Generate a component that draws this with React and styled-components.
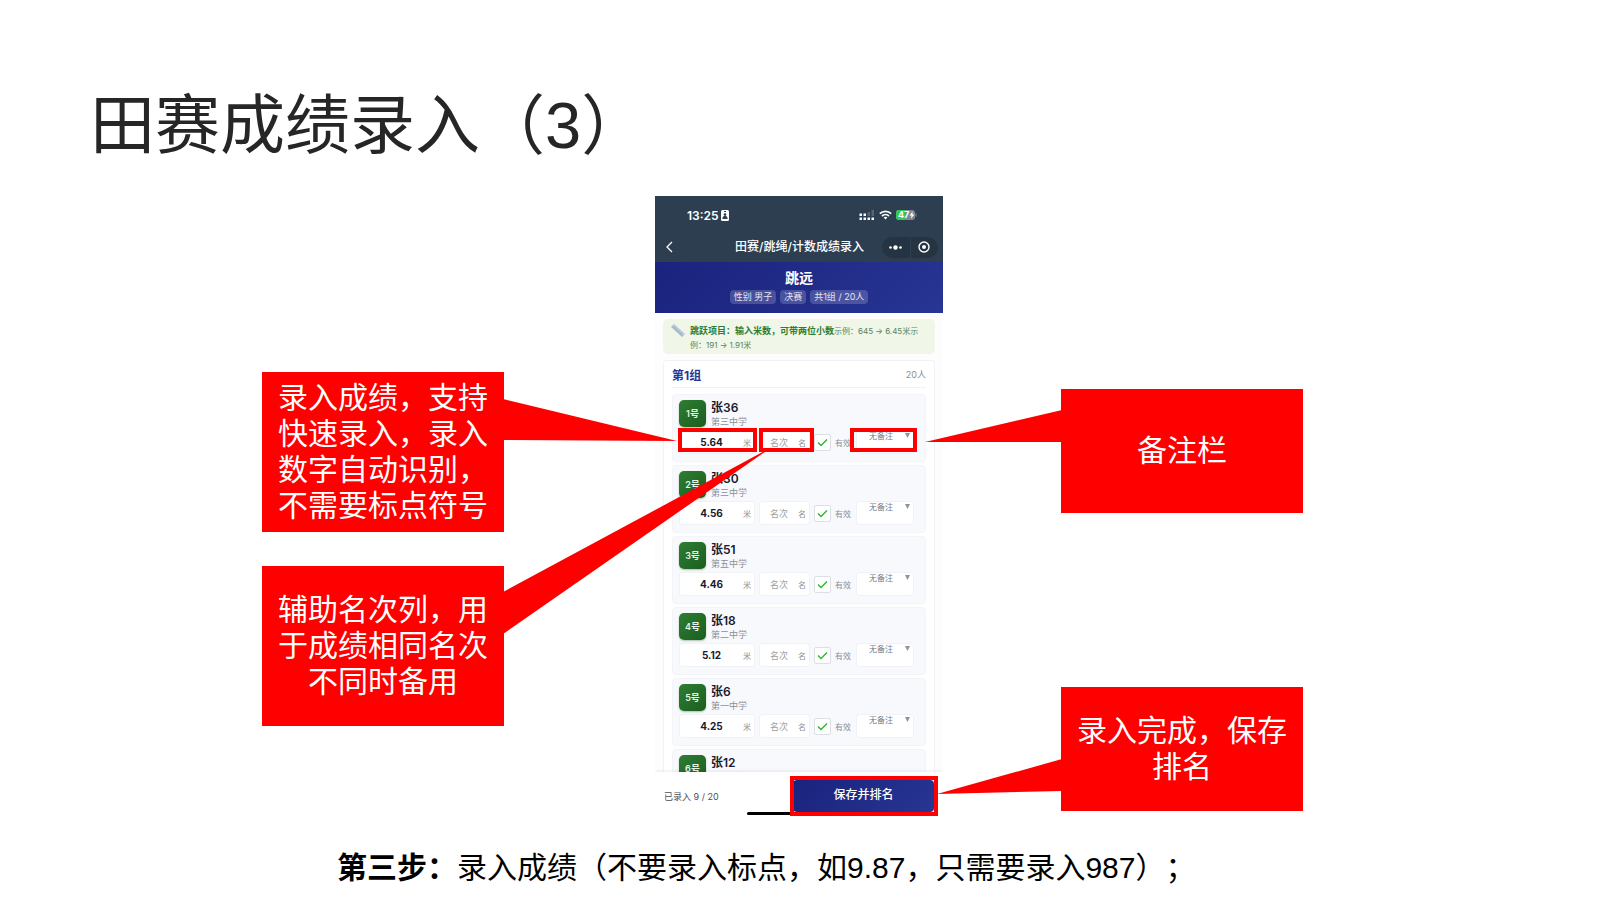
import React from "react";
import styled, { createGlobalStyle } from "styled-components";

const Palette = {
  ink: "#262626",
  mark: "#ff0000",
  bar: "#2c3e50",
  navy: "#1a237e",
  indigo: "#283593",
  green: "#1b5e20",
  leaf: "#2e7d32",
  tip: "#f0f6e8",
  line: "#f0f2f6",
  row: "#f8f9fc",
  dark: "#1a1a2e",
  dimmed: "#8a8f99",
};

const Global = createGlobalStyle`
  * {
    box-sizing: border-box;
  }
  body {
    margin: 0;
    background: #ffffff;
    color: #000000;
    font-family: "Liberation Sans", "Noto Sans CJK SC", sans-serif;
    text-spacing-trim: space-all;
  }
  input,
  select,
  button {
    font-family: inherit;
    margin: 0;
    padding: 0;
    border: none;
    background: none;
  }
`;

const Slide = styled.main`
  padding: 92px 92px 0 90px;
  min-height: 100vh;
  overflow: hidden;
`;

const Title = styled.h1`
  margin: 0 0 36px;
  color: ${Palette.ink};
  font-size: 65px;
  font-weight: 400;
  line-height: 68px;
`;

const Stage = styled.section`
  display: grid;
  grid-template-columns: 1fr 288px 1fr;
`;

const Notes = styled.div`
  position: relative;
  z-index: 2;
  display: flex;
  flex-direction: column;
  align-items: ${(p) => (p.$side === "left" ? "flex-end" : "flex-start")};
  gap: ${(p) => (p.$side === "left" ? "34px" : "174px")};
  padding: ${(p) => (p.$side === "left" ? "176px 151px 0 0" : "193px 0 0 118px")};
`;

const NoteBox = styled.div`
  position: relative;
  display: flex;
  align-items: center;
  justify-content: center;
  width: 242px;
  min-height: ${(p) => (p.$tall ? "160px" : "124px")};
  padding: 8px 16px;
  background: ${Palette.mark};
  color: #ffffff;
  font-size: 30px;
  line-height: 36px;
  text-align: center;

  p {
    margin: 0;
    width: 210px;
  }

  svg {
    position: absolute;
    top: 0;
    left: 0;
    overflow: visible;
    pointer-events: none;
  }
`;

const Phone = styled.article`
  display: flex;
  flex-direction: column;
  height: 620px;
  overflow: hidden;
  background: #fdfdfe;
  font-family: Inter, "Noto Sans CJK SC", sans-serif;
`;

const TopBar = styled.header`
  background: ${Palette.bar};
  color: #ffffff;
`;

const StatusBar = styled.div`
  display: flex;
  align-items: center;
  justify-content: space-between;
  height: 38px;
  padding: 0 26px 0 32px;
  font-size: 12px;
  font-weight: 600;

  div {
    display: flex;
    align-items: center;
    gap: 4px;
  }
  div:first-child {
    gap: 2px;
  }
`;

const NavBar = styled.div`
  display: grid;
  grid-template-columns: 62px 1fr 61px;
  align-items: center;
  height: 28px;
  padding-bottom: 2px;

  h2 {
    margin: 0;
    font-size: 12px;
    font-weight: 500;
    line-height: 16px;
    text-align: center;
    white-space: nowrap;
  }
`;

const BackButton = styled.button`
  display: flex;
  width: 20px;
  padding-left: 10px;
  color: #ffffff;
`;

const Capsule = styled.div`
  display: flex;
  width: 56px;
  height: 21px;
  border-radius: 11px;
  background: #253443;

  button {
    flex: 1;
    display: flex;
    align-items: center;
    justify-content: center;
  }
  button + button {
    border-left: 1px solid #2f3f4f;
  }
`;

const EventHead = styled.div`
  display: flex;
  flex-direction: column;
  align-items: center;
  gap: 3px;
  height: 51px;
  padding-top: 7px;
  background: linear-gradient(135deg, ${Palette.navy}, ${Palette.indigo});
  color: #ffffff;

  h3 {
    margin: 0;
    font-size: 14px;
    font-weight: 700;
    line-height: 18px;
  }
  ul {
    display: flex;
    gap: 4px;
    margin: 0;
    padding: 0;
    list-style: none;
  }
  li {
    padding: 0 4px;
    border-radius: 4px;
    background: rgba(255, 255, 255, 0.18);
    color: #e2e4f3;
    font-size: 9px;
    line-height: 14px;
    white-space: nowrap;
  }
`;

const Tip = styled.div`
  display: flex;
  gap: 5px;
  margin: 6px 8px;
  padding: 5px 14px 3px 8px;
  border-radius: 5px;
  background: ${Palette.tip};
  color: #55855a;
  font-size: 8px;
  line-height: 14px;

  svg {
    flex: none;
  }
  p {
    flex: 1;
    margin: 0 0 -1px;
  }
  strong {
    color: ${Palette.leaf};
    font-size: 9px;
  }
`;

const Group = styled.section`
  flex: 1;
  min-height: 0;
  overflow: hidden;
  margin: 0 8px;
  padding: 0 8px;
  border: 1px solid ${Palette.line};
  border-bottom: none;
  border-radius: 4px 4px 0 0;
  background: #ffffff;
`;

const GroupHead = styled.div`
  display: flex;
  align-items: center;
  justify-content: space-between;
  height: 27px;
  margin-bottom: 6px;
  border-bottom: 1px solid ${Palette.line};

  h4 {
    margin: 0;
    color: ${Palette.indigo};
    font-size: 12px;
    font-weight: 700;
  }
  span {
    color: ${Palette.dimmed};
    font-size: 9px;
  }
`;

const Athletes = styled.ol`
  display: flex;
  flex-direction: column;
  gap: 3px;
  margin: 0;
  padding: 0;
  list-style: none;
`;

const Athlete = styled.li`
  height: 68px;
  padding: 5px 6px;
  border: 1px solid #f3f4f8;
  border-radius: 4px;
  background: ${Palette.row};
`;

const Person = styled.div`
  display: flex;
  gap: 5px;
  height: 27px;
  margin-bottom: 3px;

  b {
    width: 27px;
    border-radius: 5px;
    background: linear-gradient(135deg, ${Palette.leaf}, ${Palette.green});
    box-shadow: 0 1px 2px rgba(27, 94, 32, 0.35);
    color: #e8f3e8;
    font-size: 9px;
    font-weight: 600;
    line-height: 27px;
    text-align: center;
  }
  h5 {
    margin: 0;
    color: ${Palette.dark};
    font-size: 12px;
    font-weight: 600;
    line-height: 15px;
  }
  p {
    margin: 0;
    color: ${Palette.dimmed};
    font-size: 9px;
    line-height: 13px;
  }
`;

const Controls = styled.div`
  display: flex;
  align-items: center;
  height: 24px;
  color: ${Palette.dimmed};
  font-size: 8px;
`;

const Marked = styled.div`
  position: relative;

  ${(p) =>
    p.$mark &&
    `&::after {
      content: "";
      position: absolute;
      z-index: 1;
      inset: ${p.$mark};
      border: 4px solid ${Palette.mark};
      pointer-events: none;
    }`}
`;

const Field = styled(Marked)`
  width: ${(p) => p.$width};
  margin-right: 4px;

  label {
    display: flex;
    align-items: center;
    height: 24px;
    padding-right: 3px;
    border: 1px solid ${Palette.line};
    border-radius: 3px;
    background: #ffffff;
  }
  input {
    flex: 1;
    min-width: 0;
    color: ${Palette.dark};
    font-size: ${(p) => (p.$score ? "10px" : "9px")};
    font-weight: ${(p) => (p.$score ? 700 : 400)};
    text-align: center;
  }
  input::placeholder {
    color: #9a9fa8;
  }
`;

const Valid = styled.label`
  display: flex;
  align-items: center;
  gap: 4px;
  margin-right: 5px;
  white-space: nowrap;

  input {
    appearance: none;
    width: 17px;
    height: 17px;
    border: 1px solid #dcdfe3;
    border-radius: 2px;
    background: #ffffff;
  }
  span {
    display: grid;
  }
  span > * {
    grid-area: 1 / 1;
    place-self: center;
  }
  svg {
    pointer-events: none;
  }
`;

const Remark = styled(Marked)`
  width: 58px;

  select {
    appearance: none;
    display: block;
    width: 100%;
    height: 24px;
    padding: 0 8px 11px 12px;
    border: 1px solid ${Palette.line};
    border-radius: 3px;
    background: #ffffff;
    color: #777c86;
    font-size: 8px;
    line-height: 11px;
  }
  svg {
    position: absolute;
    top: 3px;
    right: 4px;
    pointer-events: none;
  }
`;

const BottomBar = styled.footer`
  position: relative;
  display: flex;
  align-items: flex-start;
  justify-content: space-between;
  height: 44px;
  padding: 8px 9px 0;
  background: #ffffff;
  box-shadow: 0 -1px 3px rgba(0, 0, 0, 0.08);
  color: #4a4f5a;

  > span {
    font-size: 9px;
    line-height: 34px;
  }
  > i {
    position: absolute;
    bottom: 1px;
    left: 92px;
    width: 104px;
    height: 3px;
    border-radius: 2px;
    background: #000000;
  }
`;

const SaveButton = styled.button`
  display: block;
  width: 141px;
  height: 32px;
  padding-bottom: 6px;
  border-radius: 4px;
  background: linear-gradient(135deg, ${Palette.navy}, ${Palette.indigo});
  color: #ffffff;
  font-size: 12px;
  font-weight: 500;
`;

const Step = styled.p`
  margin: 34px 0 0;
  padding-left: 247px;
  font-size: 30px;
  line-height: 36px;
`;

const athletes = [
  { no: 1, name: "张36", school: "第三中学", score: "5.64" },
  { no: 2, name: "张30", school: "第三中学", score: "4.56" },
  { no: 3, name: "张51", school: "第五中学", score: "4.46" },
  { no: 4, name: "张18", school: "第二中学", score: "5.12" },
  { no: 5, name: "张6", school: "第一中学", score: "4.25" },
  { no: 6, name: "张12", school: "第一中学", score: "" },
];

function Note({ tall, tail, children }) {
  return (
    <NoteBox $tall={tall}>
      <p>{children}</p>
      <svg width="1" height="1" aria-hidden="true">
        <polygon points={tail} fill={Palette.mark} />
      </svg>
    </NoteBox>
  );
}

function AthleteRow({ no, name, school, score, marked }) {
  return (
    <Athlete>
      <Person>
        <b>{no}号</b>
        <div>
          <h5>{name}</h5>
          <p>{school}</p>
        </div>
      </Person>
      <Controls>
        <Field $score $width="76px" $mark={marked && "-2px -2px 2px -1px"}>
          <label>
            <input type="text" defaultValue={score} aria-label="成绩" />米
          </label>
        </Field>
        <Field $width="51px" $mark={marked && "-2px -4px 2px 0"}>
          <label>
            <input type="text" placeholder="名次" aria-label="名次" />名
          </label>
        </Field>
        <Valid>
          <span>
            <input type="checkbox" defaultChecked />
            <svg width="11" height="9" viewBox="0 0 11 9" fill="none">
              <path d="M1 4.5 4 7.5 10 1.5" stroke="#2fb52f" strokeWidth="1.4" />
            </svg>
          </span>
          有效
        </Valid>
        <Remark $mark={marked && "-2px -3px 2px -6px"}>
          <select aria-label="备注" defaultValue="无备注">
            <option>无备注</option>
          </select>
          <svg width="5" height="5" viewBox="0 0 5 5">
            <path d="M0 0h5L2.5 5z" fill="#8f939b" />
          </svg>
        </Remark>
      </Controls>
    </Athlete>
  );
}

function StatusIcons() {
  return (
    <div>
      <svg width="16" height="10" viewBox="0 0 16 10" fill="#ffffff">
        <path d="M.5 3.5H3V6H.5zM4.5 3.5H7V6H4.5zM.5 7.5H3V10H.5zM4.5 7.5H7V10H4.5zM8.5 7.5H11V10H8.5zM12.5 7.5H15V10h-2.5z" />
        <path d="M8.5 2H11v4H8.5zM12.5 0H15v6h-2.5z" opacity="0.2" />
      </svg>
      <svg width="13" height="10" viewBox="0 0 13 10" fill="none" stroke="#ffffff">
        <path d="M.8 3.6a8.2 8.2 0 0 1 11.4 0" strokeWidth="1.8" />
        <path d="M3 6a5.2 5.2 0 0 1 7 0" strokeWidth="1.7" />
        <path d="M6.5 9.5 4.7 7.6a2.8 2.8 0 0 1 3.6 0z" fill="#ffffff" stroke="none" />
      </svg>
      <svg width="21" height="10" viewBox="0 0 21 10">
        <rect width="19" height="10" rx="3" fill="#7d8893" />
        <path d="M3 0h6v10H3a3 3 0 0 1-3-3V3a3 3 0 0 1 3-3z" fill="#34c759" />
        <path d="M20 3.5v3" stroke="#7d8893" />
        <text x="2" y="8" fontSize="9" fontWeight="700" fill="#ffffff">
          47
        </text>
        <path d="M16.5 1.5 13.5 5.5h2L15 8.5 18.500 4.500h-2z" fill="#ffffff" />
      </svg>
    </div>
  );
}

function PhoneScreen() {
  return (
    <Phone>
      <TopBar>
        <StatusBar>
          <div>
            13:25
            <svg width="8" height="11" viewBox="0 0 8 11">
              <rect width="8" height="11" rx="1.5" fill="#ffffff" />
              <path d="M3 1.5h2M1.8 8.5a2.2 2.2 0 0 1 4.4 0z" stroke={Palette.bar} fill={Palette.bar} />
              <circle cx="4" cy="4.6" r="1.3" fill={Palette.bar} />
            </svg>
          </div>
          <StatusIcons />
        </StatusBar>
        <NavBar>
          <BackButton type="button" aria-label="返回">
            <svg width="8" height="12" viewBox="0 0 8 12" fill="none" stroke="currentColor">
              <path d="M7 1 2 6l5 5" strokeWidth="1.3" />
            </svg>
          </BackButton>
          <h2>田赛/跳绳/计数成绩录入</h2>
          <Capsule>
            <button type="button" aria-label="更多">
              <svg width="13" height="5" viewBox="0 0 13 5" fill="#ffffff">
                <circle cx="1.5" cy="2.5" r="1.3" />
                <circle cx="6.5" cy="2.5" r="2.2" />
                <circle cx="11.5" cy="2.5" r="1.3" />
              </svg>
            </button>
            <button type="button" aria-label="关闭">
              <svg width="12" height="12" viewBox="0 0 12 12" fill="none">
                <circle cx="6" cy="6" r="5" stroke="#ffffff" strokeWidth="1.4" />
                <circle cx="6" cy="6" r="2" fill="#ffffff" />
              </svg>
            </button>
          </Capsule>
        </NavBar>
      </TopBar>

      <EventHead>
        <h3>跳远</h3>
        <ul>
          <li>性别 男子</li>
          <li>决赛</li>
          <li>共1组 / 20人</li>
        </ul>
      </EventHead>

      <Tip>
        <svg width="14" height="13" viewBox="0 0 14 13">
          <path d="M3 0 14 10 11 13 0 3z" fill="#a9bccd" />
          <path d="M3 0 14 10 13 11 2 1z" fill="#c9d6e2" />
          <path d="M4 3.5 5 2.5M6 5.5l1-1M8 7.5l1-1M10 9.5l1-1" stroke="#7d8fa3" strokeWidth="0.6" />
        </svg>
        <p>
          <strong>跳跃项目：输入米数，可带两位小数</strong>示例：645 → 6.45米示例：191 → 1.91米
        </p>
      </Tip>

      <Group>
        <GroupHead>
          <h4>第1组</h4>
          <span>20人</span>
        </GroupHead>
        <Athletes>
          {athletes.map((a) => (
            <AthleteRow key={a.no} {...a} marked={a.no === 1} />
          ))}
        </Athletes>
      </Group>

      <BottomBar>
        <span>已录入 9 / 20</span>
        <i />
        <Marked $mark="-4px -4px -4px -3px">
          <SaveButton type="button">保存并排名</SaveButton>
        </Marked>
      </BottomBar>
    </Phone>
  );
}

function App() {
  return (
    <>
      <Global />
      <Slide lang="zh-CN">
        <Title>田赛成绩录入（3）</Title>
        <Stage>
          <Notes $side="left">
            <Note tall tail="241,27 241,68 415,69">
              录入成绩，支持快速录入，录入数字自动识别，不需要标点符号
            </Note>
            <Note tall tail="241,26 241,68 510,-119">
              辅助名次列，用于成绩相同名次不同时备用
            </Note>
          </Notes>
          <PhoneScreen />
          <Notes $side="right">
            <Note tail="1,21 1,53 -136,53">备注栏</Note>
            <Note tail="1,72 1,104 -124,107">录入完成，保存排名</Note>
          </Notes>
        </Stage>
        <Step>
          <strong>第三步：</strong>录入成绩（不要录入标点，如9.87，只需要录入987）；
        </Step>
      </Slide>
    </>
  );
}

export default App;
